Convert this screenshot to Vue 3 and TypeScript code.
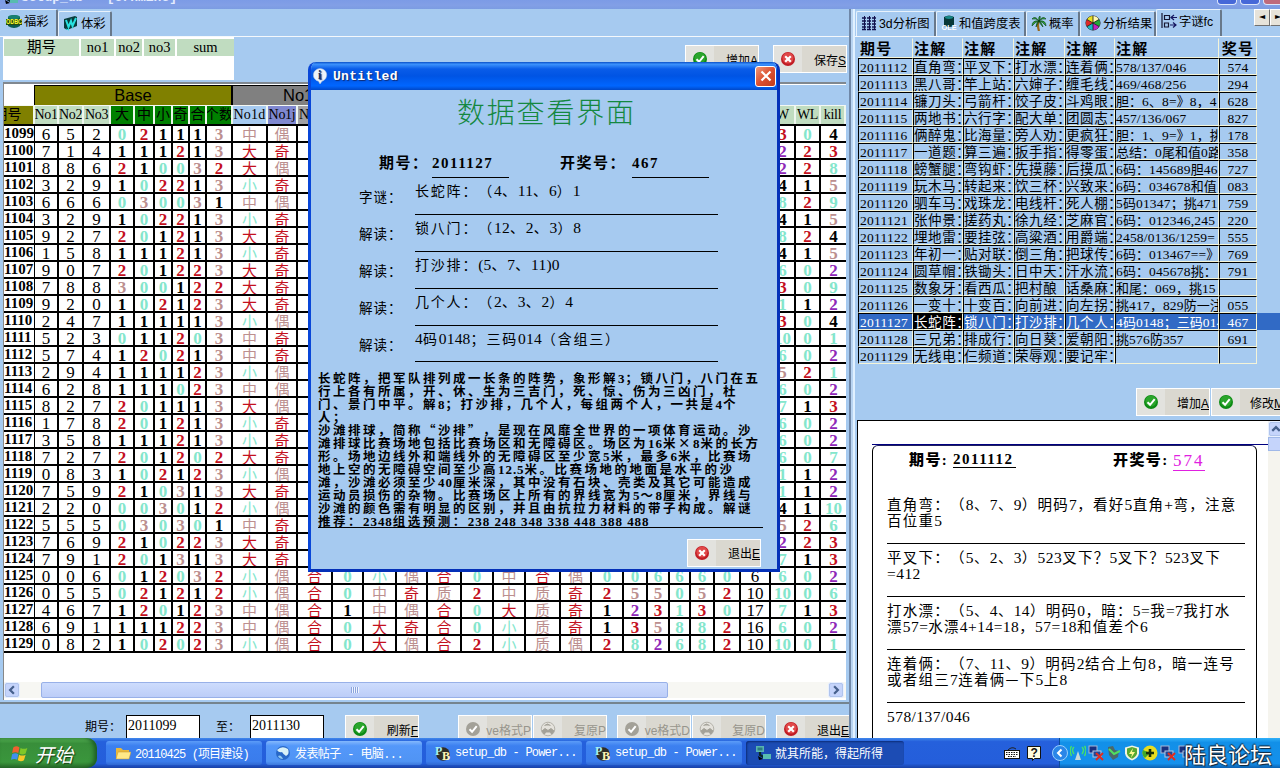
<script setup lang="ts">
import { h, type FunctionalComponent } from 'vue'

/* Text that mixes full-width characters with half-width digits */
const Mixed: FunctionalComponent<{ t: string }> = (props) => {
  const runs = props.t.match(/[\x20-\x7e]+|[^\x20-\x7e]+/g) ?? []
  return h('span', { class: 'mixed' }, runs.map((r) => (/^[\x20-\x7e]/.test(r) ? h('i', { class: 'lat' }, r) : r)))
}
Mixed.props = ['t']

const art: Record<string, string> = {
  ok: '<circle cx="8" cy="8" r="7" fill="#0c8a14"/><circle cx="8" cy="7" r="5.6" fill="#2aa52c"/><path d="M4.5 8.2l2.6 2.6 4.6-5.6" fill="none" stroke="#fff" stroke-width="2"/>',
  no: '<circle cx="8" cy="8" r="7" fill="#c01c24"/><circle cx="8" cy="7" r="5.6" fill="#e04848"/><path d="M5.2 5.2l5.6 5.6M10.8 5.2l-5.6 5.6" stroke="#fff" stroke-width="2.2"/>',
  okd: '<circle cx="8" cy="8" r="7" fill="#a3a198"/><path d="M4.5 8.2l2.6 2.6 4.6-5.6" fill="none" stroke="#fff" stroke-width="2"/>',
  nod: '<circle cx="8" cy="8" r="6.8" fill="#e4e2dc" stroke="#b4b2aa"/><path d="M2 10l3-2.500 3 2 3-2 3 2.500-2 3-2.500-2h-3l-2.500 2zM4.500 4.500l3-1.500 3 1.500" fill="#a3a198" stroke="#a3a198"/>',
  odbc: '<path d="M2 4q6-4 12 0v9q-6 4-12 0z" fill="#0b5a50"/><ellipse cx="8" cy="4" rx="6" ry="2" fill="#178070"/><rect x="0" y="6" width="16" height="6" fill="#254a10"/><text x="0" y="11.4" font-size="6.6" font-weight="bold" font-family="Liberation Sans" textLength="16" lengthAdjust="spacingAndGlyphs" fill="#ffff30">ODBC</text>',
  wave: '<path d="M1 4l11-3 2 1v9l-10 4-3-2z" fill="#093c3c"/><path d="M3 5l2.500 7L8 6l1.500 5L13 3" stroke="#28e0e0" stroke-width="2" fill="none"/><path d="M3 14l3 1" stroke="#28e0e0"/>',
  grid: '<path d="M1 3h4M6 3h4M11 3h4M1 6h4M6 6h4M11 6h4M1 9h4M6 9h4M11 9h4M1 12h4M6 12h4M11 12h4M1 14.500h4M6 14.500h4M11 14.500h4" stroke="#10104c" stroke-width="1.400"/><path d="M3.500 1v14M8.500 1v14M13.500 1v14" stroke="#10104c"/>',
  ole: '<path d="M3 2q5-3 10 0v9q-5 2-10 0z" fill="#083838"/><ellipse cx="8" cy="2.500" rx="4" ry="1.400" fill="#188888"/><text x="0.500" y="15" font-size="7.500" font-weight="bold" font-family="Liberation Sans" textLength="15" lengthAdjust="spacingAndGlyphs" fill="#fff">OLE</text>',
  palm: '<path d="M8 6q-2 4 0 10" stroke="#9a6818" stroke-width="2.200" fill="none"/><path d="M8 6Q4 0 1 4q4-1 7 2Q1 5 1 11q3-4 7-5Q5 8 5 12q2-4 3-6Q12 0 15 4q-4-1-7 2 7-1 7 5-3-4-7-5 3 2 4 6-3-3-4-6Q7 2 9 1q1 2-1 5" fill="#30a038" stroke="#064010" stroke-width=".6"/>',
  pie: '<circle cx="8" cy="8" r="7" fill="#fff" stroke="#111"/><path d="M8 8V1a7 7 0 0 1 6 3.500z" fill="#fff8b0"/><path d="M8 8l6-3.500a7 7 0 0 1 0 7z" fill="#20a838"/><path d="M8 8l6 3.500A7 7 0 0 1 8 15z" fill="#c020c0"/><path d="M8 8v7a7 7 0 0 1-6-3.500z" fill="#18b8c0"/><path d="M8 8l-6 3.500a7 7 0 0 1 0-7z" fill="#e02828"/><path d="M8 8L2 4.500A7 7 0 0 1 8 1z" fill="#e8e020"/><path d="M8 8V1M8 8l6-3.500M8 8l6 3.500M8 8v7M8 8l-6 3.500M8 8L2 4.500" stroke="#111" stroke-width=".8"/>',
  flow: '<path d="M1 0v15M3.500 2.500h5v4h-5zM3.500 10h4v4h-4z" fill="none" stroke="#151530" stroke-width="1.200"/><path d="M10 4.500h6M13 2l-3 2.500 3 2.500M9 12h6M12 9.500l3 2.500-3 2.500" fill="none" stroke="#151560" stroke-width="1.200"/>',
  info: '<path d="M8 0.500a6.800 6.500 0 0 1 2 12.700L8 16l-1.500-2.700A6.800 6.500 0 0 1 8 .5z" fill="#eef4fa" stroke="#a8c0dc" stroke-width=".6"/><text x="6" y="11.300" font-size="12" font-weight="bold" font-family="Liberation Serif" fill="#15305c">i</text>',
  folder: '<path d="M1 3h5l2 2h6v9H1z" fill="#e8b83c"/><path d="M3 7h13l-2 7H1z" fill="#ffe888" stroke="#c89428" stroke-width=".5"/>',
  globe: '<circle cx="8" cy="8" r="7" fill="#2868c8"/><path d="M2 5q5-5 11-1 2 5-2 7-3-2-4-4-3 1-5-2z" fill="#d8f0f8"/><path d="M3 11q3-2 5 3-4 0-5-3z" fill="#90c8f0"/>',
  pb: '<circle cx="8" cy="9" r="6.800" fill="#302c24"/><text x="0" y="10" font-size="12" font-weight="bold" font-family="Liberation Serif" fill="#a8f0f0">P</text><text x="7" y="14.500" font-size="12" font-weight="bold" font-family="Liberation Serif" fill="#fff4b0">B</text>',
  app: '<rect x="1" y="1" width="8" height="6" fill="#58b4b0"/><rect x="2.500" y="2.500" width="5" height="3" fill="#2c7c80"/><path d="M5 7v3l5 3" stroke="#082828" stroke-width="2.200" fill="none"/><rect x="8" y="9" width="8" height="5" fill="#58bcb0"/><path d="M3 11l5 3-4 1z" fill="#000"/>',
  flag: '<path d="M2 3q3-2 5.500 0L6.500 8Q4 6.500 1 8z" fill="#f06030"/><path d="M8.500 3.500q3 1.500 6 0L13 8.500q-3 1.500-5.500 0z" fill="#80c828"/><path d="M1 9q3-1.500 5.500 0l-1 5Q3 12.500 0 14z" fill="#4090f0"/><path d="M7.200 9.500q3 1.500 5.800 0l-1.500 5q-2.500 1.500-5.500 0z" fill="#f8c828"/>',
  kbd: '<path d="M4 5q4-4 8-1" stroke="#222" fill="none"/><rect x="0.500" y="5.500" width="15" height="8" fill="#fff" stroke="#111"/><path d="M2 7.500h12M2 9.500h12M4 11.500h8" stroke="#111" stroke-dasharray="1.500 1"/>',
  help: '<path d="M1.500 1.500h13v12h-6l-2 2v-2h-5z" fill="#fffce0" stroke="#111"/><text x="4.500" y="12" font-size="12" font-weight="bold" font-family="Liberation Sans" fill="#111">?</text>',
  chev: '<circle cx="8" cy="8" r="7.500" fill="#2a86e8" stroke="#9cd0fc"/><path d="M9.500 4.500L6 8l3.500 3.500" stroke="#fff" stroke-width="2" fill="none"/>',
  ant: '<path d="M8 6l-3 9h6z" fill="#c8d8d8"/><path d="M4 2Q1 5 4 9M1.500 1Q-1 5 1.500 11M12 2q3 3 0 7M14.500 1q3 4 0 10" stroke="#48e068" stroke-width="1.400" fill="none"/>',
  net: '<rect x="1" y="1" width="8" height="7" fill="#183080" stroke="#a8b8d8"/><rect x="5" y="6" width="8" height="6" fill="#204898" stroke="#b8c8e0"/><path d="M8 8l7 7M15 8l-7 7" stroke="#e02c20" stroke-width="2"/>',
  usb: '<path d="M2 2l5-1 2 4 4 1-1 6-5 3-4-5z" fill="#4c6868"/><path d="M3 4l5 5 6-3" stroke="#50e060" stroke-width="2" fill="none"/>',
  shield: '<path d="M8 .5l7 2v6q-1 5-7 7-6-2-7-7v-6z" fill="#f0f4e0"/><path d="M8 2l5 1.500v5q-1 3.500-5 5.200-4-1.700-5-5.200v-5z" fill="#58a830"/><path d="M9 3L5 9h3l-1 4 4-6H8z" fill="#fff890"/>',
  plus: '<circle cx="8" cy="8" r="7.500" fill="#e8dc20"/><path d="M3 13A7 7 0 0 1 1 5l7 3z" fill="#40a828"/><path d="M8 4v8M4 8h8" stroke="#183008" stroke-width="2.600"/>',
}
const Ico: FunctionalComponent<{ n: string }> = (props) =>
  h('svg', { class: 'ico', viewBox: '0 0 16 16', innerHTML: art[props.n] })
Ico.props = ['n']

const widths = [31, 24, 25, 27, 24, 20, 18, 17, 17, 26, 35, 30, 35, 31, 33, 31, 34, 32, 32, 35, 31, 32, 24, 22, 21, 24, 26, 30, 25, 25, 25]
const gridCols = widths.map((w) => w + 'px').join(' ')
const heads = ['期号', 'No1', 'No2', 'No3', '大', '中', '小', '奇', '合', '个数', 'No1d', 'No1j', 'No1z']
const headClass = (i: number) =>
  i === 0 ? 'olive' : i < 4 ? 'mint' : i < 10 ? 'green' : i === 10 ? 'sky' : i === 11 ? 'peri' : i < 28 ? 'gray' : 'mint'
const headText = (i: number) => (i < 13 ? heads[i] : i === 28 ? 'W' : i === 29 ? 'WL' : i === 30 ? 'kill' : '')

const front = `652021113中偶 714111213大奇 886210032大偶 329102213小奇 666030031中偶 329102213小奇 927201213大奇 158111213小奇
907201223大奇 788300122大奇 920102123大奇 247111113小偶 523011203中奇 574120213中奇 294111123小偶 628111023中偶 827201113大偶
178201213小奇 358111213小奇 727201202大奇 083102123小偶 759210313大奇 220003012小偶 555030301中奇 769210223大奇 791201313大奇
006012032小偶 055021212小偶 467120123中偶 691111223中偶 082102023小偶`.split(/\s+/)
const tail = `3,0,4 2,2,3 2,2,8 4,1,5 8,2,9 4,1,5 8,2,4 4,1,5 6,0,2 3,0,9 1,1,2 3,0,4 10,0,1 6,0,2 5,2,1 6,0,2 7,1,3 6,0,2
6,0,2 6,0,7 1,1,2 1,1,2 4,1,10 5,2,6 2,2,3 7,1,3 6,0,2 10,0,6 7,1,3 6,0,2 10,0,1`.split(/\s+/)
const middle: Record<number, string> = {
  26: '合,0,小,偶,合,0,中,合,偶,0,0,6,6,6,0,6',
  27: '合,0,中,奇,质,2,中,质,奇,2,5,5,0,5,2,10',
  28: '合,1,中,偶,合,0,大,质,奇,1,2,3,1,3,0,17',
  29: '合,0,大,奇,合,0,小,质,奇,1,3,5,8,8,2,16',
  30: '合,0,大,偶,合,2,小,质,偶,2,8,2,6,8,2,10',
}
const rows = front.map((f, i) => [
  String(1099 + i),
  ...f.split(''),
  ...(middle[i] ? middle[i].split(',') : Array<string>(16).fill('')),
  ...tail[i].split(','),
])
function tone(v: string, c: number): string {
  if (c === 0) return 'rowid'
  if (c < 4 || c === 27) return 'plain'
  if ('大奇合'.includes(v)) return 'red han'
  if ('中偶质'.includes(v)) return 'rosy han'
  if (v === '小') return 'aqua han'
  if ((c >= 22 && c <= 25) || c === 28 || c === 30)
    return ({ '2': 'purple', '3': 'red', '4': 'black', '5': 'rosy' } as Record<string, string>)[v] ?? 'aqua'
  return ['aqua', 'black', 'red', 'rosy'][Number(v)] ?? 'aqua'
}

const notes = `2011112|直角弯：|平叉下：|打水漂：|连着俩：|578/137/046|574
2011113|黑八哥：|竿上站：|六婶子：|缠毛线：|469/468/256|294
2011114|镰刀头：|弓箭杆：|饺子皮：|斗鸡眼：|胆：6、8=》8，4|628
2011115|两地书：|六行字：|配大单：|团圆志：|457/136/067|827
2011116|俩醉鬼：|比海量：|旁人劝：|更疯狂：|胆：1、9=》1，挑|178
2011117|一道题：|算三遍：|扳手指：|得零蛋：|总结：0尾和值0路|358
2011118|螃蟹腿：|弯钩虾：|先摸藤：|后摸瓜：|6码：145689胆46|727
2011119|玩木马：|转起来：|饮三杯：|兴致来：|6码：034678和值|083
2011120|驷车马：|戏珠龙：|电线杆：|死人棚：|5码01347；挑471|759
2011121|张仲景：|搓药丸：|徐九经：|芝麻官：|6码：012346,245|220
2011122|埋地雷：|要挂弦：|高粱酒：|用爵端：|2458/0136/1259=|555
2011123|年初一：|贴对联：|倒三角：|把球传：|6码：013467==》|769
2011124|圆草帽：|铁锄头：|日中天：|汗水流：|6码：045678挑：|791
2011125|数象牙：|看西瓜：|把村酿|话桑麻：|和尾：069，挑15|
2011126|一变十：|十变百：|向前进：|向左拐：|挑417，829防一注|055
2011127|长蛇阵：|锁八门：|打沙排：|几个人：|4码0148；三码014|467
2011128|三兄弟：|排成行：|向日葵：|爱朝阳：|挑576防357|691
2011129|无线电：|仨频道：|荣辱观：|要记牢：||`.split('\n').map((l) => l.split('|'))

const fields = [
  ['字谜：', '长蛇阵：（4、11、6）1'],
  ['解读：', '锁八门：（12、2、3）8'],
  ['解读：', '打沙排：(5、7、11)0'],
  ['解读：', '几个人：（2、3、2）4'],
  ['解读：', '4码0148；三码014（含组三）'],
]
const story = [
  '长蛇阵，把军队排列成一长条的阵势，象形解3；锁八门，八门在五',
  '行上各有所属，开、休、生为三吉门，死、惊、伤为三凶门，杜',
  '门、景门中平。解8；打沙排，几个人，每组两个人，一共是4个',
  '人；',
  '沙滩排球，简称“沙排”，是现在风靡全世界的一项体育运动。沙',
  '滩排球比赛场地包括比赛场区和无障碍区。场区为16米×8米的长方',
  '形。场地边线外和端线外的无障碍区至少宽5米，最多6米，比赛场',
  '地上空的无障碍空间至少高12.5米。比赛场地的地面是水平的沙',
  '滩，沙滩必须至少40厘米深，其中没有石块、壳类及其它可能造成',
  '运动员损伤的杂物。比赛场区上所有的界线宽为5～8厘米，界线与',
  '沙滩的颜色需有明显的区别，并且由抗拉力材料的带子构成。解谜',
  '推荐：2348组选预测：238 248 348 338 448 388 488',
]
const report = [
  ['直角弯：（8、7、9）明码7，看好5直角+弯，注意', '百位重5'],
  ['平叉下：（5、2、3）523叉下？5叉下？523叉下', '=412'],
  ['打水漂：（5、4、14）明码0，暗：5=我=7我打水', '漂57=水漂4+14=18，57=18和值差个6'],
  ['连着俩：（7、11、9）明码2结合上句8，暗一连号', '或者组三7连着俩—下5上8'],
  ['578/137/046'],
]
const rightTabs = [
  { n: 'grid', t: '3d分析图', c: 't1' },
  { n: 'ole', t: '和值跨度表', c: 't2' },
  { n: 'palm', t: '概率', c: 't3' },
  { n: 'pie', t: '分析结果', c: 't4' },
  { n: 'flow', t: '字谜fc', c: 't5 on' },
]
const tasks = [
  { n: 'folder', t: '20110425 (项目建设)', c: 'k1' },
  { n: 'globe', t: '发表帖子 - 电脑...', c: 'k2 light' },
  { n: 'pb', t: 'setup_db - Power...', c: 'k3' },
  { n: 'pb', t: 'setup_db - Power...', c: 'k4' },
  { n: 'app', t: '就其所能，得起所得', c: 'k5 active' },
]
const tray = ['ant', 'net', 'usb', 'shield', 'plus', 'net', 'net']
</script>

<template>
  <div class="screen">
    <header class="topbar">
      <Ico n="app" />
      <span class="toptext">setup_db * [ernmine]</span>
      <span class="wbtn"></span><span class="wbtn"></span><span class="wbtn close"></span>
    </header>

    <main class="work">
      <section class="left">
        <nav class="tabs">
          <span class="tab l1 on"><Ico n="odbc" />福彩</span>
          <span class="tab l2"><Ico n="wave" />体彩</span>
        </nav>
        <div class="upper">
          <div class="mini">
            <span>期号</span><span>no1</span><span>no2</span><span>no3</span><span>sum</span>
          </div>
          <button class="btn b-add"><Ico n="ok" /><b>增加<u>A</u></b></button>
          <button class="btn b-save"><Ico n="no" /><b>保存<u>S</u></b></button>
        </div>
        <div class="frame">
          <div class="groups">
            <span class="blank"></span><span class="base">Base</span><span class="no1">No1</span><span class="rest"></span>
          </div>
          <div class="line heads" :style="{ gridTemplateColumns: gridCols }">
            <span v-for="(w, i) in widths" :key="i" :class="headClass(i)"><em>{{ headText(i) }}</em></span>
          </div>
          <div class="body">
            <div v-for="(r, ri) in rows" :key="ri" class="line data" :style="{ gridTemplateColumns: gridCols }">
              <span v-for="(v, ci) in r" :key="ci" :class="v ? tone(v, ci) : ''">{{ v }}</span>
            </div>
          </div>
          <div class="hscroll">
            <span class="sbtn"><svg viewBox="0 0 8 8"><path d="M5.500 1L2.500 4l3 3" /></svg></span>
            <span class="thumb"><i></i></span>
            <span class="sbtn"><svg viewBox="0 0 8 8"><path d="M2.500 1l3 3-3 3" /></svg></span>
          </div>
        </div>
        <footer class="query">
          <label class="q1">期号：</label><span class="inp">2011099</span>
          <label class="q2">至：</label><span class="inp">2011130</span>
          <button class="btn f1"><Ico n="ok" /><b>刷新<u>F</u></b></button>
          <button class="btn f2 dis"><Ico n="okd" /><b>ve格式P</b></button>
          <button class="btn f3 dis"><Ico n="nod" /><b>复原P</b></button>
          <button class="btn f4 dis"><Ico n="okd" /><b>ve格式D</b></button>
          <button class="btn f5 dis"><Ico n="nod" /><b>复原D</b></button>
          <button class="btn f6"><Ico n="no" /><b>退出<u>E</u></b></button>
        </footer>
      </section>
      <div class="splitter"></div>

      <section class="right">
        <nav class="tabs">
          <span v-for="t in rightTabs" :key="t.t" class="tab" :class="t.c"><Ico :n="t.n" />{{ t.t }}</span>
          <span class="arrow">◄</span><span class="arrow">►</span>
        </nav>
        <div class="notes">
          <div class="nrow nhead">
            <span>期号</span><span>注解</span><span>注解</span><span>注解</span><span>注解</span><span>注解</span><span>奖号</span>
          </div>
          <div v-for="(n, i) in notes" :key="i" class="nrow" :class="{ sel: i === 15 }">
            <span v-for="(v, c) in n" :key="c"><Mixed :t="v" /></span>
          </div>
        </div>
        <div class="nbtns">
          <button class="btn"><Ico n="ok" /><b>增加<u>A</u></b></button>
          <button class="btn"><Ico n="ok" /><b>修改<u>M</u></b></button>
        </div>
        <div class="paper">
          <div class="sheet">
            <div class="topline"></div>
            <div class="card">
              <div class="chead">
                <b class="c1">期号:</b><b class="c2">2011112</b><b class="c3">开奖号:</b><span class="c4">574</span>
              </div>
              <div v-for="(g, i) in report" :key="i" class="para">
                <p v-for="l in g" :key="l"><Mixed :t="l" /></p>
              </div>
            </div>
          </div>
          <div class="vscroll">
            <span class="sbtn"><svg viewBox="0 0 8 8"><path d="M1 5.500l3-3 3 3" /></svg></span>
            <span class="vthumb"></span>
          </div>
        </div>
      </section>
    </main>

    <footer class="taskbar">
      <div class="start"><Ico n="flag" />开始</div>
      <div v-for="(k, i) in tasks" :key="i" class="task" :class="k.c"><Ico :n="k.n" />{{ k.t }}</div>
      <div class="lang"><Ico n="kbd" /><Ico n="help" /></div>
      <div class="tray"><Ico n="chev" /><Ico v-for="(t, i) in tray" :key="i" :n="t" /></div>
    </footer>
    <div class="mark">陆良论坛</div>

    <div class="dialog">
      <div class="dtitle"><Ico n="info" /><span>Untitled</span>
        <div class="dclose"><svg viewBox="0 0 18 18"><path d="M4.500 4.500l9 9M13.500 4.500l-9 9" /></svg></div>
      </div>
      <div class="dbody">
        <h1>数据查看界面</h1>
        <div class="dhead">
          <span class="h1">期号：</span><span class="val">2011127</span>
          <span class="h2">开奖号：</span><span class="val">467</span>
        </div>
        <div v-for="(f, i) in fields" :key="i" class="field">
          <label>{{ f[0] }}</label><div><Mixed :t="f[1]" /></div>
        </div>
        <div class="story"><p v-for="s in story" :key="s"><Mixed :t="s" /></p></div>
        <button class="btn"><Ico n="no" /><b>退出<u>E</u></b></button>
      </div>
    </div>
  </div>
</template>

<style>
html, body { margin: 0; overflow: hidden; }
.mixed { white-space: pre; }
.lat { font-style: normal; font-family: "Liberation Serif", serif; letter-spacing: var(--lg, 0.3px); font-size: var(--ls, 15px); }
.ico { width: 16px; height: 16px; flex: none; display: block; }
</style>

<style scoped>
* { box-sizing: border-box; }
.screen { position: relative; width: 1280px; height: 768px; overflow: hidden; background: #a6caf0; color: #000; font-family: "Liberation Sans", "Noto Sans CJK SC", sans-serif; font-size: 12px; display: flex; flex-direction: column; white-space: nowrap; text-spacing-trim: space-all; }
.topbar { height: 9px; flex: none; background: linear-gradient(#7c9be6, #829fe6 60%, #7b9ce2); display: flex; overflow: hidden; }
.topbar .ico { margin: -11px 0 0 2px; }
.toptext { flex: 1; margin: -9px 0 0 3px; color: #e4ecff; font: bold 13px/14px "Liberation Mono", monospace; }
.wbtn { width: 20px; height: 5px; margin-right: 3px; background: #4668d8; border: 1px solid #dce6fa; border-top: 0; border-radius: 0 0 4px 4px; }
.wbtn.close { background: #bf6a7c; margin-right: -3px; }
.work { flex: 1; display: flex; min-height: 0; }
.left { width: 849px; flex: none; display: flex; flex-direction: column; }
.splitter { width: 6px; flex: none; background: #b8d4f2; border-left: 2px solid #7088a8; border-right: 2px solid #e0f0ff; }
.right { flex: 1; min-width: 0; overflow: hidden; display: flex; flex-direction: column; }
.tabs { height: 28px; flex: none; display: flex; align-items: flex-end; border-bottom: 1px solid #f4f8fc; }
.tab { height: 25px; display: flex; align-items: center; gap: 2px; padding: 0 0 2px 4px; font-size: 12.3px; border: 1px solid #e8f2fc; border-right: 2px solid #68788a; border-bottom: 0; border-radius: 2px 2px 0 0; overflow: hidden; flex: none; }
.tab.on { height: 27px; padding-bottom: 5px; }
.l1 { width: 58px; border-left: 0; padding-left: 6px; }
.l2 { width: 54px; }
.t1 { width: 80px; margin-left: 1px; } .t2 { width: 90px; } .t3 { width: 54px; } .t4 { width: 76px; } .t5 { width: 66px; margin-right: 32px; }
.arrow { width: 16px; height: 17px; margin-bottom: 10px; background: #e6e3da; border: 1px solid #fff; border-right-color: #707070; border-bottom-color: #707070; font: 8px/14px "DejaVu Sans", sans-serif; text-align: center; flex: none; }

.upper { height: 45px; flex: none; display: flex; }
.mini { width: 231px; height: 43px; margin-left: 3px; background: #fff; padding: 2px 1px; display: grid; grid-template-columns: 75px 33px 26px 31px 57px; column-gap: 2px; align-items: start; }
.mini span { background: #c0dcc0; height: 17px; text-align: center; font: 14.500px/17px "Liberation Serif", "Noto Sans CJK SC", serif; overflow: hidden; }
.btn { width: 74px; height: 28px; flex: none; padding: 0; border: 1px solid #fff; outline: 0; background: linear-gradient(90deg, #e2e2de 0 28px, #dad8d0 28px); display: flex; align-items: center; overflow: hidden; color: #000; font-family: "Liberation Sans", "Noto Sans CJK SC", sans-serif; }
.btn .ico { margin-left: 6px; }
.btn b { font-weight: 400; font-size: 12px; margin-left: auto; margin-right: 0; flex: none; }
.btn.dis { color: #97958c; }
.b-add { margin: 8px 0 0 451px; }
.b-save { margin: 8px 0 0 14px; }

.frame { height: 618px; flex: none; margin-left: 3px; width: 843px; border-left: 1px solid #888; border-top: 2px solid #808890; background: #fff; overflow: hidden; }
.groups { height: 20px; margin-top: 1px; display: grid; grid-template-columns: 30px 199px 230px 1fr; font: 16.500px/19px "Liberation Sans", sans-serif; text-align: center; }
.groups .base { background: #808000; border: 1px solid #000; border-bottom: 0; border-right-width: 2px; }
.groups .no1 { background: #808080; border-top: 1px solid #000; text-align: left; padding-left: 50px; }
.groups .rest { background: #a6caf0; }
.line { display: grid; }
.heads { height: 19px; font: 14px/18px "Liberation Serif", "Noto Sans CJK SC", serif; }
.heads span { height: 19px; border-right: 2px solid #eef6ee; overflow: hidden; display: flex; justify-content: center; border-top: 1px solid #f4f8f4; }
.heads em { font-style: normal; flex: none; letter-spacing: 0.2px; }
.heads .mint em, .heads .peri em { letter-spacing: -0.3px; }
.heads .olive em { margin-left: -22px; }
.olive { background: #808000; } .mint { background: #c0dcc0; } .green { background: #008000; } .sky { background: #a6caf0; } .peri { background: #8088d0; } .gray { background: #a0a0a4; }
.body { border-top: 2px solid #000; height: 558px; }
.data { height: 17px; }
.data span { height: 17px; border-right: 2px solid #000; border-bottom: 2px solid #000; text-align: center; font: bold 17px/17px "Liberation Serif", serif; overflow: hidden; }
.data span:last-child { border-right: 0; }
.data .han { font: 400 15px/15px "Noto Sans CJK SC", sans-serif; }
.data .plain { font-weight: 400; }
.data .rowid { font-size: 15px; line-height: 14px; border-right-width: 1px; text-align: left; }
.red { color: #c4101e; } .rosy { color: #bc8f8f; } .aqua { color: #84e6cc; } .purple { color: #9028b8; } .black { color: #000; }
.hscroll { height: 16px; display: flex; background: #f7f7f3; }
.sbtn { width: 16px; height: 16px; flex: none; background: #c5d4fb; border: 1px solid #e8f0ff; outline: 1px solid #b0c4ec; outline-offset: -2px; border-radius: 3px; display: grid; place-items: center; }
.sbtn svg { width: 10px; height: 10px; fill: none; stroke: #46608c; stroke-width: 1.8; }
.thumb { width: 627px; margin: 0 160px 0 21px; flex: none; background: linear-gradient(#cddcfd, #bccdf8); border: 1px solid #98b0e8; border-radius: 2px; display: grid; place-items: center; }
.thumb i { width: 8px; height: 6px; background: repeating-linear-gradient(90deg, #8ca4dc 0 1px, #eef4ff 1px 2px); }

.query { flex: 1; min-height: 0; margin-top: 2px; border-top: 2px solid #75848e; display: flex; padding-top: 11px; overflow: hidden; }
.query > * { flex: none; }
.q1 { width: 41px; margin-left: 85px; line-height: 24px; } .q2 { width: 34px; margin-left: 16px; line-height: 24px; }
.inp { width: 74px; height: 30px; background: #fff; border: 1px solid #000; padding-left: 1px; font: 14px/19px "Liberation Serif", serif; color: #000; }
.f1 { margin-left: 21px; } .f2 { margin-left: 39px; } .f4 { margin-left: 10px; } .f6 { margin-left: 10px; }
.f3 { margin-left: 1px; } .f5 { margin-left: 1px; }

.notes { height: 351px; flex: none; padding: 1px 0 0 3px; }
.nrow { height: 17px; width: 430px; display: grid; grid-template-columns: 55px 50px 51px 51px 50px 104px 38px; font: 13.500px/15px "Noto Sans CJK SC", sans-serif; letter-spacing: 0.6px; --ls: 13.5px; --lg: 0.25px; }
.nrow span { overflow: hidden; }
.nrow > span { height: 17px; border: 1px solid #f4f4d8; border-top-color: #000; border-left-color: #000; }
.nrow > span:first-child { padding-left: 1px; }
.nrow > span:nth-child(6) { font-size: 13px; letter-spacing: 0; --lg: 0.2px; }
.nrow > span:last-child { text-align: center; }
.nhead { height: 20px; font: bold 15px/18px "Noto Sans CJK SC", sans-serif; letter-spacing: 1.2px; }
.nhead > span { height: 20px; border-top-color: #a6caf0; border-left-color: #a6caf0; }
.nhead > span:nth-child(6) { font-size: 15px; letter-spacing: 1.2px; }
.nrow.sel { background: #316ac5; color: #fff; }
.nrow.sel > span:nth-child(2) { background: #000; }
.nbtns { height: 32px; flex: none; display: flex; gap: 1px; padding-left: 281px; }
.paper { flex: 1; min-height: 0; margin-left: 2px; border-top: 1px solid #000; border-left: 1px solid #000; background: #fff; display: flex; }
.sheet { flex: 1; padding: 23px 0 0 14px; overflow: hidden; }
.topline { height: 1px; background: #000080; }
.card { width: 385px; height: 320px; border: 1px solid #000; border-top-color: #202060; border-radius: 6px 6px 0 0; padding-left: 14px; }
.chead { height: 45px; display: flex; align-items: flex-start; font: bold 15px/28px "Liberation Serif", "Noto Sans CJK SC", serif; letter-spacing: 1.400px; }
.c1 { width: 44px; margin-left: 22px; } .c2 { width: 63px; border-bottom: 1px solid #000; line-height: 19px; padding-top: 4px; height: 22px; letter-spacing: 1.5px; }
.c3 { margin-left: 97px; width: 60px; } .c4 { color: #e020e0; font-weight: 400; font-size: 17px; line-height: 20px; padding-top: 5px; letter-spacing: 2px; height: 25px; border-bottom: 1px solid #e020e0; }
.para { width: 358px; height: 53px; border-bottom: 1px solid #000; font: 14.500px/16px "Noto Sans CJK SC", sans-serif; letter-spacing: 1.250px; --ls: 15.5px; --lg: 0.45px; padding-top: 5px; }
.para:last-child { border-bottom: 0; }
.para p { margin: 0; height: 16px; }
.vscroll { width: 12px; flex: none; background: #f5f4ee; overflow: hidden; }
.vthumb { display: block; width: 16px; height: 14px; background: #c5d4fb; border: 1px solid #a0b8e8; }

.taskbar { height: 30px; flex: none; display: flex; align-items: center; background: linear-gradient(#4088ec 0, #2560dc 12%, #245edb 85%, #1941a5); color: #fff; }
.start { width: 97px; height: 30px; display: flex; align-items: center; gap: 6px; padding-left: 11px; background: linear-gradient(#5ab858, #388e3a 18%, #3a963c 80%, #2a6c2a); border-radius: 0 10px 10px 0; box-shadow: inset -3px 0 4px #1c5c24; font: italic 19px "Noto Sans CJK SC", sans-serif; text-shadow: 1px 1px 1px #143c14; }
.start .ico { width: 18px; height: 18px; }
.task { width: 156px; height: 24px; margin-left: 4px; display: flex; align-items: center; gap: 4px; padding-left: 9px; border-radius: 3px; background: linear-gradient(#5c9cf8, #3c80f0 20%, #3a7cec 85%, #3068d0); font-size: 12px; font-family: "Liberation Mono", "Noto Sans CJK SC", monospace; letter-spacing: -0.8px; overflow: hidden; }
.k1 { margin-left: 9px; letter-spacing: -0.9px; } .k2 { letter-spacing: -0.6px; } .k5 { width: 158px; letter-spacing: 0; }
.light { background: linear-gradient(#84b8fc, #5498fa 20%, #5094f4 85%, #3c78dc); }
.active { background: #1c4cb4; box-shadow: inset 1px 1px 2px #0c2c78; }
.lang { margin-left: auto; display: flex; gap: 6px; margin-right: 17px; }
.tray { width: 221px; height: 30px; background: linear-gradient(#30b0f8, #1290e8 15%, #1490ec 85%, #0c60b0); border-left: 1px solid #0c4c9c; display: flex; align-items: center; gap: 2px; }
.tray .ico:first-child { margin-left: -8px; }
.mark { position: absolute; left: 1184px; top: 738px; color: #fff; font: 22px/30px "Noto Sans CJK SC", sans-serif; text-shadow: 1px 1px 1px #123, -1px 0 1px #123, 0 -1px 1px #123; }

.dialog { position: absolute; left: 308px; top: 62px; width: 472px; height: 510px; background: #a6caf0; border: 3px solid #0846d8; border-top: 0; border-right-color: #0430b8; border-bottom-color: #0430b8; border-radius: 8px 8px 0 0; overflow: hidden; }
.dtitle { height: 28px; margin: 0 -3px; background: linear-gradient(#0a50c8, #3c92fc 8%, #0a5ce8 25%, #0054e4 50%, #0066ff 85%, #0048c8); display: flex; align-items: center; padding: 0 4px; color: #fff; font: bold 13px "Liberation Mono", "DejaVu Sans Mono", monospace; text-shadow: 1px 1px 1px #102a70; }
.dtitle span { margin-left: 5px; letter-spacing: 0.3px; }
.dclose { margin-left: auto; width: 21px; height: 21px; border: 1px solid #fff; border-radius: 3px; background: linear-gradient(135deg, #f09878, #dc5030 50%, #c03c1c); display: grid; place-items: center; }
.dclose svg { width: 18px; height: 18px; stroke: #fff; stroke-width: 2.2; }
.dbody { padding: 0 7px; height: 417px; }
.dbody h1 { margin: 0; padding: 1px 0 0 139px; height: 59px; font: 300 28px/40px "Noto Sans CJK SC", sans-serif; color: #148840; letter-spacing: 1.800px; }
.dhead { display: flex; height: 29px; font: bold 15px/28px "Liberation Serif", "Noto Sans CJK SC", serif; letter-spacing: 1.5px; }
.dhead .h1 { width: 53px; margin-left: 61px; } .dhead .h2 { width: 72px; margin-left: 51px; }
.dhead .val { width: 77px; border-bottom: 1px solid #000; }
.field { height: 36.9px; display: flex; font: 14px/20px "Noto Sans CJK SC", sans-serif; letter-spacing: 1.8px; --ls: 15.5px; --lg: 0.2px; }
.field label { width: 56px; margin-left: 41px; padding-top: 8px; overflow: hidden; flex: none; font-size: 13.5px; letter-spacing: 1px; }
.field div { width: 303px; border-bottom: 1px solid #000; padding-top: 2px; }
.story { margin-top: 8.500px; height: 157px; width: 445px; border-bottom: 1px solid #000; font: bold 12.5px/13px "Noto Sans CJK SC", sans-serif; letter-spacing: 2.500px; --ls: 13px; --lg: 0.95px; }
.story p { margin: 0; height: 13px; }
.dbody .btn { margin: 11px 0 0 369px; }
</style>
